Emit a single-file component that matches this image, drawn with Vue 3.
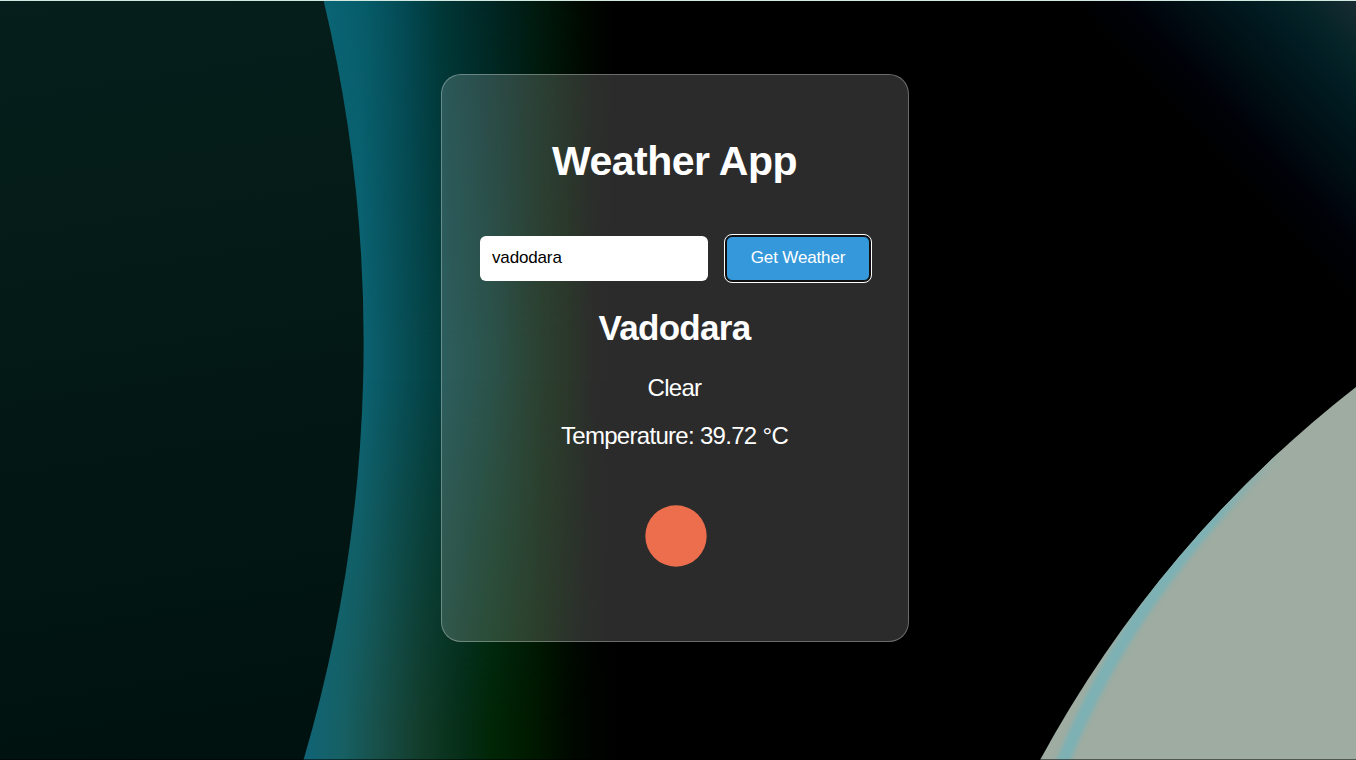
<script setup>
import { ref } from 'vue'

const city = ref('vadodara')
const weather = { name: 'Vadodara', condition: 'Clear', temperature: '39.72' }
</script>

<template>
  <main class="page">
    <svg class="backdrop" viewBox="0 0 1356 760" preserveAspectRatio="none" aria-hidden="true">
      <defs>
        <linearGradient id="glowTop" gradientUnits="userSpaceOnUse" x1="320" y1="0" x2="620" y2="0">
          <stop offset="0" stop-color="#0b6676" />
          <stop offset=".15" stop-color="#075c69" />
          <stop offset=".28" stop-color="#044a54" />
          <stop offset=".4" stop-color="#003838" />
          <stop offset=".55" stop-color="#002826" />
          <stop offset=".75" stop-color="#00180c" />
          <stop offset=".88" stop-color="#000900" />
          <stop offset="1" stop-color="#000" />
        </linearGradient>
        <linearGradient id="glowMid" gradientUnits="userSpaceOnUse" x1="360" y1="0" x2="620" y2="0">
          <stop offset="0" stop-color="#0c6474" />
          <stop offset=".15" stop-color="#085058" />
          <stop offset=".3" stop-color="#033e3f" />
          <stop offset=".5" stop-color="#003026" />
          <stop offset=".7" stop-color="#001a06" />
          <stop offset=".8" stop-color="#001000" />
          <stop offset=".9" stop-color="#020300" />
          <stop offset="1" stop-color="#000" />
        </linearGradient>
        <linearGradient id="glowBottom" gradientUnits="userSpaceOnUse" x1="300" y1="0" x2="620" y2="0">
          <stop offset="0" stop-color="#106478" />
          <stop offset=".13" stop-color="#166064" />
          <stop offset=".24" stop-color="#18504a" />
          <stop offset=".38" stop-color="#123c2a" />
          <stop offset=".5" stop-color="#062e18" />
          <stop offset=".6" stop-color="#002606" />
          <stop offset=".72" stop-color="#001a00" />
          <stop offset=".86" stop-color="#000700" />
          <stop offset="1" stop-color="#000" />
        </linearGradient>
        <linearGradient id="fadeMid" x1="0" y1="0" x2="0" y2="1">
          <stop offset="0" stop-color="#000" />
          <stop offset=".45" stop-color="#fff" />
        </linearGradient>
        <linearGradient id="fadeBottom" x1="0" y1="0" x2="0" y2="1">
          <stop offset=".5" stop-color="#000" />
          <stop offset=".96" stop-color="#fff" />
        </linearGradient>
        <mask id="maskMid"><rect width="1356" height="760" fill="url(#fadeMid)" /></mask>
        <mask id="maskBottom"><rect width="1356" height="760" fill="url(#fadeBottom)" /></mask>
        <linearGradient id="planet" gradientUnits="userSpaceOnUse" x1="0" y1="0" x2="120" y2="760">
          <stop offset="0" stop-color="#061f1c" />
          <stop offset=".5" stop-color="#031915" />
          <stop offset="1" stop-color="#001210" />
        </linearGradient>
        <linearGradient id="corner" gradientUnits="userSpaceOnUse" x1="1356" y1="0" x2="1203" y2="143">
          <stop offset="0" stop-color="#182c32" />
          <stop offset=".2" stop-color="#052428" />
          <stop offset=".38" stop-color="#001a20" />
          <stop offset=".6" stop-color="#000f14" />
          <stop offset=".8" stop-color="#000209" />
          <stop offset="1" stop-color="#000" />
        </linearGradient>
        <linearGradient id="rim" gradientUnits="userSpaceOnUse" x1="1060" y1="760" x2="1280" y2="450">
          <stop offset="0" stop-color="#7db1b4" />
          <stop offset=".75" stop-color="#7db1b4" />
          <stop offset="1" stop-color="#9eaca1" />
        </linearGradient>
        <clipPath id="moon"><path d="M1356 387A1194 1194 0 0 0 1040 760H1356Z" /></clipPath>
        <filter id="soft" x="-20%" y="-20%" width="140%" height="140%"><feGaussianBlur stdDeviation="2.2" /></filter>
      </defs>
      <rect width="1356" height="760" fill="#000" />
      <rect x="300" width="320" height="760" fill="url(#glowTop)" />
      <rect x="300" width="320" height="760" fill="url(#glowMid)" mask="url(#maskMid)" />
      <rect x="300" width="320" height="760" fill="url(#glowBottom)" mask="url(#maskBottom)" />
      <path d="M0 0H323.500A1480 1480 0 0 1 303.500 760H0Z" fill="url(#planet)" />
      <rect x="1030" width="326" height="360" fill="url(#corner)" />
      <g clip-path="url(#moon)">
        <rect x="1030" y="380" width="326" height="380" fill="#9eaca1" />
        <path d="M1062 764C1088 699 1124 635 1164 581C1196 537 1233 494 1280 450" fill="none" stroke="url(#rim)" stroke-width="13" filter="url(#soft)" />
      </g>
      <rect width="1356" height="1" fill="#d2e9e1" />
      <rect y="759" width="1356" height="1" fill="#000" opacity=".5" />
    </svg>

    <section class="card">
      <h1>Weather App</h1>
      <form class="search" @submit.prevent>
        <input v-model="city" type="text" aria-label="City" />
        <button type="submit">Get Weather</button>
      </form>
      <h2>{{ weather.name }}</h2>
      <p>{{ weather.condition }}</p>
      <p>Temperature: {{ weather.temperature }} °C</p>
      <svg class="sun" viewBox="0 0 62 62" aria-hidden="true"><circle cx="31" cy="31" r="30.700" fill="#ec6e4c" /></svg>
    </section>
  </main>
</template>

<style>
body {
  margin: 0;
  background: #000;
}
</style>

<style scoped>
.page {
  position: relative;
  box-sizing: border-box;
  height: 760px;
  padding: 74px 447px 0 441px;
  overflow: hidden;
  font-family: "Liberation Sans", Arial, sans-serif;
  color: #fff;
}
.backdrop {
  position: absolute;
  inset: 0;
  width: 100%;
  height: 100%;
}
.card {
  position: relative;
  box-sizing: border-box;
  height: 568px;
  padding: 63px 39px 0 38px;
  border: 1px solid rgba(255, 255, 255, .3);
  border-radius: 20px;
  background: rgba(255, 255, 255, .17);
  display: flex;
  flex-direction: column;
  align-items: center;
}
h1, h2, p {
  margin: 0;
  white-space: nowrap;
}
h1 {
  font-size: 41px;
  line-height: 46px;
  letter-spacing: -.5px;
}
.search {
  display: flex;
  align-self: stretch;
  gap: 18px;
  margin: 52px 0 27px;
}
input, button {
  box-sizing: border-box;
  flex-shrink: 0;
  height: 45px;
  border: 0;
  border-radius: 6px;
  font-family: inherit;
  font-size: 17px;
  letter-spacing: -.15px;
}
input {
  width: 228px;
  padding: 0 12px 2px;
  background: #fff;
  color: #000;
  outline: none;
}
button {
  width: 144px;
  padding: 0 0 2px;
  background: #3498db;
  color: #fff;
  border: 1px solid #101010;
  outline: 1px solid #fff;
  outline-offset: 1px;
  box-shadow: 0 0 0 1px #101010;
}
h2 {
  font-size: 35px;
  line-height: 40px;
  letter-spacing: -.7px;
}
p {
  font-size: 24px;
  line-height: 26px;
  letter-spacing: -.7px;
}
h2 + p {
  margin-top: 27px;
}
p + p {
  margin-top: 22px;
}
.sun {
  width: 62px;
  height: 62px;
  margin: 56px 0 0 2px;
}
</style>
